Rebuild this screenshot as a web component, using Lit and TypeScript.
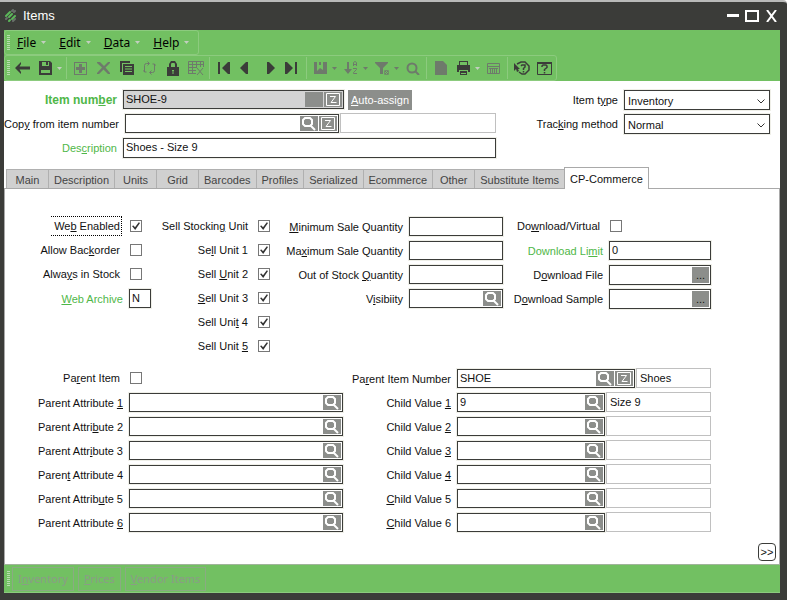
import { LitElement, html, css, svg, nothing, TemplateResult } from "lit";
import { customElement, state } from "lit/decorators.js";
import { classMap } from "lit/directives/class-map.js";

/** Turns "Sell &Unit" into a text whose access key is underlined. */
const keyed = (text: string) => {
  const at = text.indexOf("&");
  return at < 0 ? text : html`${text.slice(0, at)}<u>${text[at + 1]}</u>${text.slice(at + 2)}`;
};

const icon = (w: number, h: number, body: unknown) =>
  html`<svg width=${w} height=${h} viewBox="0 0 ${w} ${h}" fill="currentColor" aria-hidden="true">${body}</svg>`;

const glyphs: Record<string, TemplateResult> = {
  back: icon(15, 12, svg`<path d="M0 6 6 0v2L4.500 4.500H15v3H4.500L6 10v2z"/>`),
  save: icon(13, 14, svg`<path fill-rule="evenodd" d="M0 0h11l2 2v12H0zM3 1v4h7V1zM2 9v3h9V9z"/><path d="M7 1h2v3H7z"/>`),
  add: icon(13, 13, svg`<path fill-rule="evenodd" d="M0 0h13v13H0zM1 1v11h11V1z"/><path d="M5 2h3v3h3v3H8v3H5V8H2V5h3z"/>`),
  remove: icon(13, 12, svg`<path d="M0 0h3l4 4 4-4h2v1L8.500 5.500 13 11v1h-2L6.500 7.500 2 12H0v-1l5-5.500L0 1z"/>`),
  copy: icon(14, 14, svg`<path d="M0 0h10v2H2v9H0z"/><path fill-rule="evenodd" d="M3 3h11v11H3zM5 5v1h7V5zm0 2.500v1h7v-1zM5 10v1h7v-1z"/>`),
  refresh: icon(13, 14, svg`<g fill="none" stroke="currentColor"><path d="M1.500 11V4.500q0-2 2-2H6M11.500 3v6.500q0 2-2 2H7M4.500.5l2 2-2 2M8.500 9.500l-2 2 2 2M.5 9.500l1 1.500h2M12.500 4.500l-1-1.500h-2"/></g>`),
  lock: icon(12, 15, svg`<path d="M2 7V3l2-3h4l2 3v4H8V3.500L7.500 2h-3L4 3.500V7z"/><path fill-rule="evenodd" d="M0 6h12v9H0zM5 9v1h.500v3h1v-3H7V9z"/>`),
  sheet: icon(16, 14, svg`<g fill="none" stroke="currentColor"><path d="M.5 12.500V.5h15V6M0 3.500h15M0 6.500h9M0 9.500h8M0 12.500h8M4.500 0v13M8.500 0v7M12.500 0v6M9 7l6 7M15 7l-6 7"/></g>`),
  first: icon(12, 12, svg`<path d="M0 0h2v12H0zM12 0v12h-2L4 6l6-6z"/>`),
  prev: icon(8, 12, svg`<path d="M8 0v12H6L0 6l6-6z"/>`),
  next: icon(8, 12, svg`<path d="M0 0v12h2l6-6-6-6z"/>`),
  last: icon(12, 12, svg`<path d="M10 0h2v12h-2zM0 0v12h2l6-6-6-6z"/>`),
  book: icon(13, 12, svg`<path d="M0 0h3v9l3-3 3 2V0h4v12H0z"/><path d="M5 0h2v3H5z"/>`),
  sort: icon(14, 14, svg`<path d="M3 1h2v7h3l-4 5-4-5h3z"/><g fill="none" stroke="currentColor"><path d="M9.500 5V1.500L11 .5l1.500 1V5M9 3.500h4M9 7.500h3.500v1l-3 3v1H13"/></g>`),
  filter: icon(14, 13, svg`<path d="M0 0h13v1L8 6v6H5V6L0 1z"/><path fill="none" stroke="currentColor" d="M9.500 8.500l4 4M13.500 8.500l-4 4M9.500 10.500a2 2 0 1 0 4 0 2 2 0 1 0-4 0"/>`),
  search: icon(14, 13, svg`<g fill="none" stroke="currentColor" stroke-width="2"><circle cx="6" cy="6" r="4.500"/><path d="M9 9l4 4"/></g>`),
  doc: icon(12, 14, svg`<path d="M0 0h8l4 4v10H0z"/>`),
  print: icon(13, 14, svg`<path fill-rule="evenodd" d="M2 0h9v4h2v7h-2V9H2v2H0V4h2zM3 1v3h7V1z"/><path fill-rule="evenodd" d="M3 10h7v4H3zM4 12v1h5v-1z"/>`),
  table: icon(13, 11, svg`<g fill="none" stroke="currentColor"><path d="M.5.5h12v10H.5zM0 3.500h13M2 5.500h9M3.500 5v5M5.500 5v5M7.500 5v5M9.500 5v5"/></g>`),
  whatsThis: icon(16, 15, svg`<path d="M0 2v8l2-2 1 3 2-1-1-2h2z"/><path fill="none" stroke="currentColor" stroke-width="1.500" d="M3 3l4-2h4l4 4v4l-4 4H8l-3-2M7 5l1-1h3v2L9.500 7.500V9M9.500 10v1.500"/>`),
  help: icon(15, 13, svg`<path fill="none" stroke="currentColor" d="M.5.5h14v12H.5z"/><path d="M0 0h15v2H0z"/><path fill="none" stroke="currentColor" stroke-width="1.500" d="M5 5V4l1-1h3l1 1v1.500L7.500 7.500V9M7.500 10v1.500"/>`),
};

const caret = html`<svg class="caret" width="5" height="3" viewBox="0 0 5 3" aria-hidden="true"><path d="M0 0h5L2.500 3z" fill="currentColor"/></svg>`;
const lens = icon(18, 15, svg`<g fill="none" stroke="currentColor" stroke-width="2"><path d="M5 2h5l2 2v4l-2 2H5L3 8V4z"/><path d="M10.500 9.500 15 14"/></g>`);
const zoomKey = icon(18, 15, svg`<g fill="none" stroke="currentColor"><path d="M2.500 1.500h13v12h-13z"/><path d="M6 4.500h5.500L7 10.500h5.500"/></g>`);

type Tool = { id: string; title: string; off?: boolean; menu?: boolean };
const on = (id: string, title: string, menu = false): Tool => ({ id, title, menu });
const off = (id: string, title: string, menu = false): Tool => ({ id, title, menu, off: true });

const toolGroups: Tool[][] = [
  [on("back", "Close"), on("save", "Save", true)],
  [off("add", "New"), off("remove", "Delete"), on("copy", "Copy"), off("refresh", "Refresh"), on("lock", "Lock"), off("sheet", "Table view")],
  [on("first", "First"), on("prev", "Previous"), on("next", "Next"), on("last", "Last")],
  [off("book", "Bookmark", true), off("sort", "Sort", true), off("filter", "Filter", true), off("search", "Search")],
  [off("doc", "Preview"), on("print", "Print", true), off("table", "Grid")],
  [on("whatsThis", "What's this?"), on("help", "Help")],
];

const tabs = ["Main", "Description", "Units", "Grid", "Barcodes", "Profiles", "Serialized", "Ecommerce", "Other", "Substitute Items", "CP-Commerce"];

type Extra = "lens" | "zoom" | "blank" | "browse";

@customElement("app-root")
export class AppRoot extends LitElement {
  @state() private tab = "CP-Commerce";

  static styles = css`
    :host {
      display: block;
      --dark: #3b3c39;
      --green: #72c062;
      --edge: #8ccb7e;
      --grey: #8c8e8b;
      font: 11px/20px "Liberation Sans", Arial, sans-serif;
      color: #111;
    }
    * { box-sizing: border-box; }
    button, input, select { font: inherit; color: inherit; margin: 0; padding: 0; border: 0; border-radius: 0; background: none; }
    svg { display: block; flex: none; }
    u { text-underline-offset: 1px; }
    .window {
      min-height: 100vh; display: flex; flex-direction: column;
      padding: 0 7px 7px 4px; background: var(--dark);
      border-top: 2px solid #b9bab9; border-bottom: 1px solid #fff;
      border-top-right-radius: 4px;
    }
    .title { display: flex; align-items: center; height: 28px; color: #fff; gap: 6px; }
    .title h1 { flex: 1; margin: 0; font-size: 13px; font-weight: 400; }
    .sys { display: flex; gap: 6px; padding-right: 2px; }
    .bars { background: var(--green); height: 51px; display: flex; flex-direction: column; align-items: flex-start; }
    .bar { display: flex; align-items: center; border: 1px solid var(--edge); border-radius: 3px; padding-left: 2px; height: 26px; }
    .menus { height: 25px; font: 12px/20px "Noto Sans", sans-serif; padding-right: 4px; }
    .grip { width: 3px; height: 16px; background: repeating-linear-gradient(#b9dcb1 0 1px, transparent 1px 2px); }
    .menu { display: flex; align-items: center; gap: 5px; padding: 0 5px 0 8px; color: #000; }
    .menu:first-of-type { padding-left: 7px; }
    .caret { color: #c3cfc0; }
    .group { display: flex; height: 22px; padding: 0 2px; border-right: 1px solid var(--edge); }
    .group:first-of-type { padding-left: 1px; }
    .group:last-of-type { border: 0; padding-right: 0; }
    .nav { padding: 0 5px 0 4px; }
    .tool { display: flex; align-items: center; justify-content: center; width: 23px; color: var(--dark); }
    .nav .tool { width: 20px; }
    .nav .tool:nth-child(3) { margin-left: 7px; }
    .drop { width: auto; padding: 0 2px 0 5px; gap: 5px; }
    .tool:disabled, .tool:disabled .caret { color: #6e7a6b; }

    .body { flex: 1; display: flex; flex-direction: column; background: #fff; }
    .head { display: grid; grid-template-columns: 492fr 284fr; padding-top: 7px; }
    .row { display: flex; height: 24px; padding-top: 2px; gap: 6px; align-items: flex-start; }
    .row > label { text-align: right; white-space: nowrap; flex: 1; }
    .head .ids > label { flex: 0 0 113px; }
    .type { padding-right: 10px; }
    .green { color: #4fb748; }
    .strong { font-size: 12px; font-weight: 700; }
    .ctl { display: flex; flex: 1; min-width: 0; gap: 1px; }
    .box {
      display: flex; gap: 1px; flex: 1; min-width: 0; height: 19px; padding: 1px;
      border: 1px solid var(--dark); background: #fff; box-shadow: 0 0 0 1px #efefe8;
    }
    .box input { flex: 1; min-width: 0; width: 0; height: 14px; padding-left: 1px; outline: none; }
    .tall { height: 20px; }
    .shade { background: #d3d3d3; }
    .look { flex: none; width: 18px; height: 15px; background: var(--grey); color: #fff; }
    .browse { height: 16px; line-height: 16px; color: #111; width: 17px; }
    .note { flex: none; height: 20px; margin-top: -1px; padding: 0 3px; border: 1px solid #c0c0c0; background: #fff; outline: none; }
    .w156 { width: 156px; }
    .w105 { width: 105px; }
    .w75 { width: 75px; }
    .number .box { flex: 0 1 221px; }
    .assign { margin-left: 3px; width: 64px; height: 20px; background: var(--grey); color: #fff; }
    .pick { display: grid; width: 146px; height: 20px; border: 1px solid var(--dark); box-shadow: 0 0 0 1px #efefe8; }
    .pick select { grid-area: 1 / 1; appearance: none; padding-left: 3px; outline: none; }
    .pick svg { grid-area: 1 / 1; justify-self: end; align-self: center; margin-right: 4px; pointer-events: none; }

    .tabs { display: flex; align-items: flex-end; height: 22px; margin-top: 7px; padding-left: 1px; border-bottom: 1px solid #a9a9a9; }
    .tab { height: 19px; min-width: 42px; padding: 0 5px; border: 1px solid #b0b0b0; border-width: 1px 1px 0 1px; margin-left: -1px; background: #d0d0d0; color: #444; white-space: nowrap; box-sizing: content-box; height: 18px; min-width: 31px; }
    .tab:first-child { margin-left: 1px; min-width: 31px; }
    .current { position: relative; height: 21px; margin-bottom: -1px; background: #fff; color: #111; border-color: #a9a9a9; }
    .panel { flex: 1; display: flex; flex-direction: column; gap: 8px; padding: 26px 0 3px; border: solid #a9a9a9; border-width: 0 1px; }
    .upper { display: grid; grid-template-columns: 146fr 119fr 233fr 208fr 68fr; }
    .lower { display: grid; grid-template-columns: 338fr 368fr 68fr; }
    .row > .fit { flex: none; }
    .c22 { width: 22px; }
    .c13 { width: 13px; }
    .c94 { width: 94px; }
    .c102 { width: 102px; }
    .c214 { width: 214px; }
    .lower .parents > label { flex: 0 0 118px; }
    .lower .children > label { flex: 0 0 108px; }
    .row > .tick { padding-right: 3px; line-height: 18px; }
    .focus { display: flex; justify-content: flex-end; }
    .focus span { height: 20px; margin: -1px -2px 0 0; padding: 0 1px 0 3px; border: 1px dotted #000; border-left: 0; }
    .check { appearance: none; width: 12px; height: 12px; margin: 3px 0 0 1px; border: 1px solid #777; background: #fff; }
    .check:checked::before {
      content: ""; display: block; width: 10px; height: 10px; background: #333;
      clip-path: polygon(10% 50%, 25% 45%, 40% 62%, 78% 12%, 90% 20%, 42% 90%);
    }
    .more { align-self: flex-end; margin: auto 3px 0 0; width: 18px; height: 18px; border: 1px solid var(--dark); border-radius: 4px; line-height: 14px; }
    .foot { display: flex; align-items: center; gap: 4px; height: 29px; padding-left: 3px; background: var(--green); border-top: 1px solid #a0b49a; border-bottom: 1px solid var(--edge); font: 11px/20px "Noto Sans", sans-serif; }
    .foot .grip { margin-right: -2px; }
    .foot button { height: 24px; padding: 0 5px; border: 1px solid #8aab82; color: #8b9c87; }
  `;

  private fid(text: string) {
    return text.replace(/&/g, "").replace(/\W+/g, "-").toLowerCase();
  }

  private extra(kind: Extra) {
    if (kind === "browse") return html`<button class="look browse" aria-label="Browse">...</button>`;
    const glyph = kind === "lens" ? lens : kind === "zoom" ? zoomKey : nothing;
    return html`<button class="look" aria-label=${kind === "zoom" ? "Zoom" : "Look up"}>${glyph}</button>`;
  }

  private box(label: string, value = "", extras: Extra[] = [], cls = "") {
    return html`<span class="box ${cls}"><input id=${this.fid(label)} .value=${value}>${extras.map((e) => this.extra(e))}</span>`;
  }

  private field(label: string, size: string, value = "", extras: Extra[] = [], green = false, cls = "") {
    return html`<div class="row">
      <label class=${green ? "green" : ""} for=${this.fid(label)}>${keyed(label)}</label>
      <span class="ctl fit ${size}">${this.box(label, value, extras, cls)}</span>
    </div>`;
  }

  private check(label: string, size: string, checked = false, focus = false) {
    return html`<div class="row">
      <label class="tick ${focus ? "focus" : ""}" for=${this.fid(label)}>${focus ? html`<span>${keyed(label)}</span>` : keyed(label)}</label>
      <span class="ctl fit ${size}"><input class="check" type="checkbox" id=${this.fid(label)} .checked=${checked}></span>
    </div>`;
  }

  private child(label: string, value: string, note: string, wide = false) {
    return html`<div class="row children">
      <label for=${this.fid(label)}>${keyed(label)}</label>
      <span class="ctl">${this.box(label, value, wide ? ["lens", "zoom"] : ["lens"])}<input
        class="note ${wide ? "w75" : "w105"}" readonly aria-label="${label.replace("&", "")} name" .value=${note}></span>
    </div>`;
  }

  private pick(label: string, value: string) {
    return html`<div class="row type">
      <label for=${this.fid(label)}>${keyed(label)}</label>
      <span class="pick"><select id=${this.fid(label)}><option>${value}</option></select>
        <svg width="8" height="5" viewBox="0 0 8 5"><path d="M.5.5 4 4 7.500.5" fill="none" stroke="#333"/></svg></span>
    </div>`;
  }

  private tool(t: Tool) {
    return html`<button class=${classMap({ tool: true, drop: !!t.menu })} title=${t.title} ?disabled=${!!t.off}>${glyphs[t.id]}${t.menu ? caret : nothing}</button>`;
  }

  render() {
    return html`<div class="window">
      <header class="title">
        <svg width="13" height="14" viewBox="0 0 13 14" fill="none" stroke-width="2" stroke-linecap="round">
          <path stroke="#5cb85a" d="M2 7l4-4M5 8l3-3M5 12l1-1M8 10l3-3"/>
          <path stroke="#68706a" d="M8 2l1-1M10 3l1-1M2 10l1-1M9 12l2-2"/>
        </svg>
        <h1>Items</h1>
        <div class="sys">
          <button aria-label="Minimize"><svg width="12" height="12" viewBox="0 0 12 12"><path d="M0 4h12v3H0z" fill="#fff"/></svg></button>
          <button aria-label="Maximize"><svg width="14" height="12" viewBox="0 0 14 12"><path d="M1 1h12v10H1z" fill="none" stroke="#fff" stroke-width="2"/></svg></button>
          <button aria-label="Close"><svg width="13" height="12" viewBox="0 0 13 12"><path d="M2 0l9 12M11 0L2 12" fill="none" stroke="#fff" stroke-width="2"/></svg></button>
        </div>
      </header>
      <div class="bars">
        <nav class="bar menus">
          <span class="grip"></span>
          ${["&File", "&Edit", "&Data", "&Help"].map((m) => html`<button class="menu"><span>${keyed(m)}</span>${caret}</button>`)}
        </nav>
        <div class="bar">
          <span class="grip"></span>
          ${toolGroups.map((g, i) => html`<div class=${classMap({ group: true, nav: i === 2 })}>${g.map((t) => this.tool(t))}</div>`)}
        </div>
      </div>
      <main class="body">
        <div class="head">
          <div>
            <div class="row ids number">
              <label class="green strong" for="item-number">${keyed("Item num&ber")}</label>
              <span class="ctl">${this.box("Item number", "SHOE-9", ["blank", "zoom"], "shade")}<button class="assign">${keyed("&Auto-assign")}</button></span>
            </div>
            <div class="row ids">
              <label for="copy-from-item-number">${keyed("Cop&y from item number")}</label>
              <span class="ctl">${this.box("Copy from item number", "", ["lens", "zoom"])}<input class="note w156" readonly aria-label="Copied item"></span>
            </div>
            <div class="row ids">
              <label class="green" for="description">${keyed("Des&cription")}</label>
              <span class="ctl">${this.box("Description", "Shoes - Size 9", [], "tall")}</span>
            </div>
          </div>
          <div>${this.pick("Item t&ype", "Inventory")}${this.pick("Trac&king method", "Normal")}</div>
        </div>
        <div class="tabs" role="tablist">
          ${tabs.map((t) => html`<button role="tab" aria-selected=${t === this.tab} class=${classMap({ tab: true, current: t === this.tab })} @click=${() => (this.tab = t)}>${t}</button>`)}
        </div>
        <section class="panel" role="tabpanel">
          <div class="upper">
            <div>
              ${this.check("We&b Enabled", "c22", true, true)}
              ${this.check("Allow Bac&korder", "c22")}
              ${this.check("Alwa&ys in Stock", "c22")}
              ${this.field("&Web Archive", "c22", "N", [], true)}
            </div>
            <div>
              ${["Sell Stockin&g Unit", "Se&ll Unit 1", "Sell &Unit 2", "&Sell Unit 3", "Sell Uni&t 4", "Sell Unit &5"].map((l) => this.check(l, "c13", true))}
            </div>
            <div>
              ${this.field("&Minimum Sale Quantity", "c94")}
              ${this.field("Ma&ximum Sale Quantity", "c94")}
              ${this.field("Out of Stock &Quantity", "c94")}
              ${this.field("V&isibiity", "c94", "", ["lens"])}
            </div>
            <div>
              ${this.check("Do&wnload/Virtual", "c102")}
              ${this.field("Download Li&mit", "c102", "0", [], true)}
              ${this.field("D&ownload File", "c102", "", ["browse"], false, "tall")}
              ${this.field("D&ownload Sample", "c102", "", ["browse"], false, "tall")}
            </div>
          </div>
          <div class="lower">
            <div>
              <div class="row parents">
                <label class="tick" for="parent-item">${keyed("Pa&rent Item")}</label>
                <span class="ctl"><input class="check" type="checkbox" id="parent-item"></span>
              </div>
              ${["Parent Attribute &1", "Parent Attri&bute 2", "Parent Attr&ibute 3", "Paren&t Attribute 4", "Parent Attrib&ute 5", "Parent Attribute &6"].map(
                (l) => html`<div class="row parents"><label for=${this.fid(l)}>${keyed(l)}</label><span class="ctl">${this.box(l, "", ["lens"])}</span></div>`
              )}
            </div>
            <div>
              ${this.child("Pa&rent Item Number", "SHOE", "Shoes", true)}
              ${this.child("Child Value &1", "9", "Size 9")}
              ${["Child Value &2", "Child Value &3", "Child Value &4", "&Child Value 5", "&Child Value 6"].map((l) => this.child(l, "", ""))}
            </div>
          </div>
          <button class="more" aria-label="More">&gt;&gt;</button>
        </section>
      </main>
      <footer class="foot">
        <span class="grip"></span>
        ${["I&nventory", "&Prices", "&Vendor Items"].map((b) => html`<button disabled>${keyed(b)}</button>`)}
      </footer>
    </div>`;
  }
}
